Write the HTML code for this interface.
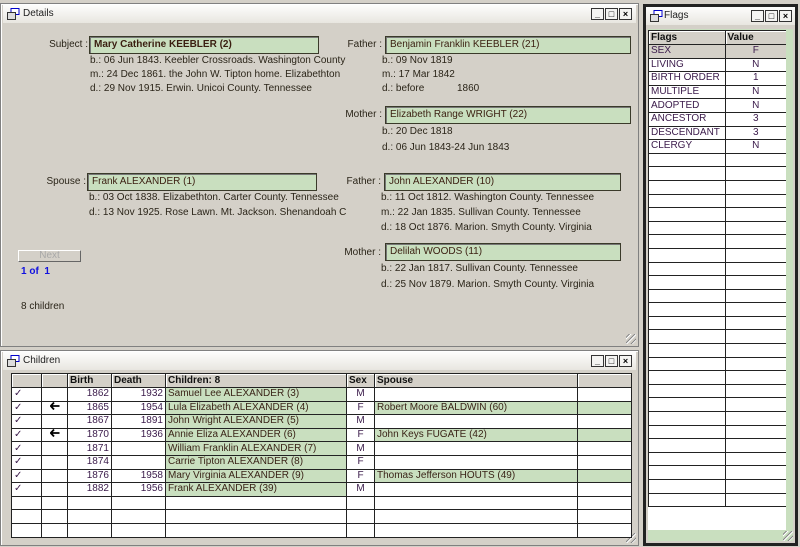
<!DOCTYPE html>
<html><head><meta charset="utf-8"><style>
*{margin:0;padding:0;box-sizing:border-box}
html,body{width:800px;height:547px;overflow:hidden}
body{background:#d4d0c8;font-family:"Liberation Sans",Tahoma,sans-serif;font-size:10px;color:#2a2418;position:relative}
.a{position:absolute;white-space:nowrap}
.win{position:absolute;background:#d4d0c8;border:1px solid #808080;box-shadow:inset 1px 1px 0 #fff}
.tb{position:absolute;left:2px;right:2px;height:18px;background:linear-gradient(#fdfdfc,#e8e6e0);}
.tt{position:absolute;left:20px;top:3px;font-size:10px;color:#222}
.ic{position:absolute;left:4px;top:3px;width:13px;height:12px}
.btns{position:absolute;right:4px;top:3px;display:flex;gap:1px}
.btns span{width:13px;height:12px;border:1px solid #333;background:#f4f4f2;font-size:9px;line-height:10px;text-align:center;font-weight:bold;color:#000}
.box{position:absolute;height:18px;background:#c9dfbf;border:1px solid #3a3a2a;box-shadow:inset 1px 1px 0 #777;padding:2px 4px;font-size:10px;white-space:nowrap;color:#3a1e10}
.lb{position:absolute;text-align:right;white-space:nowrap}
table{border-collapse:collapse;position:absolute;table-layout:fixed;background:#fff}
td{border:1px solid #222;height:13.6px;padding:0 2px;font-size:10px;white-space:nowrap;overflow:hidden;line-height:12px;color:#3a1a4a}
th{border:1px solid #222;height:14px;background:#d4d0c8;text-align:left;padding:0 2px;font-size:10px;font-weight:bold;color:#111;box-shadow:inset 1px 1px 0 #fff}
.g{background:#c9dfbf;color:#3a2418}
.r{text-align:right}.c{text-align:center}
.grip{position:absolute;right:2px;bottom:2px;width:10px;height:10px;background:repeating-linear-gradient(135deg,transparent 0 2px,#888 2px 3px,#fff 3px 4px)}
</style></head><body>

<div class="win" style="left:0;top:3px;width:639px;height:344px">
 <div class="tb" style="top:1px"><svg class="ic" viewBox="0 0 13 12"><rect x="4" y="0.5" width="8" height="6" fill="#fff" stroke="#00c"/><rect x="0.5" y="4.5" width="8" height="7" fill="#ddd" stroke="#333"/></svg><div class="tt">Details</div>
 <div class="btns"><span>_</span><span>□</span><span>×</span></div></div>
 <div class="grip"></div>
</div>
<div class="lb a" style="left:20px;width:68px;top:39px">Subject :</div>
<div class="box" style="left:89px;top:36px;width:230px;font-weight:bold">Mary Catherine KEEBLER (2)</div>
<div class="a" style="left:90px;top:55px">b.: 06 Jun 1843. Keebler Crossroads. Washington County</div>
<div class="a" style="left:90px;top:69px">m.: 24 Dec 1861. the John W. Tipton home. Elizabethton</div>
<div class="a" style="left:90px;top:83px">d.: 29 Nov 1915. Erwin. Unicoi County. Tennessee</div>

<div class="lb a" style="left:330px;width:52px;top:39px">Father :</div>
<div class="box" style="left:385px;top:36px;width:246px">Benjamin Franklin KEEBLER (21)</div>
<div class="a" style="left:382px;top:55px">b.: 09 Nov 1819</div>
<div class="a" style="left:382px;top:69px">m.: 17 Mar 1842</div>
<div class="a" style="left:382px;top:83px">d.: before</div><div class="a" style="left:457px;top:83px">1860</div>

<div class="lb a" style="left:330px;width:52px;top:109px">Mother :</div>
<div class="box" style="left:385px;top:106px;width:246px">Elizabeth Range WRIGHT (22)</div>
<div class="a" style="left:382px;top:126px">b.: 20 Dec 1818</div>
<div class="a" style="left:382px;top:142px">d.: 06 Jun 1843-24 Jun 1843</div>

<div class="lb a" style="left:20px;width:66px;top:176px">Spouse :</div>
<div class="box" style="left:87px;top:173px;width:230px">Frank ALEXANDER (1)</div>
<div class="a" style="left:89px;top:192px">b.: 03 Oct 1838. Elizabethton. Carter County. Tennessee</div>
<div class="a" style="left:89px;top:207px">d.: 13 Nov 1925. Rose Lawn. Mt. Jackson. Shenandoah C</div>

<div class="lb a" style="left:330px;width:51px;top:176px">Father :</div>
<div class="box" style="left:384px;top:173px;width:237px">John ALEXANDER (10)</div>
<div class="a" style="left:381px;top:192px">b.: 11 Oct 1812. Washington County. Tennessee</div>
<div class="a" style="left:381px;top:207px">m.: 22 Jan 1835. Sullivan County. Tennessee</div>
<div class="a" style="left:381px;top:222px">d.: 18 Oct 1876. Marion. Smyth County. Virginia</div>

<div class="lb a" style="left:330px;width:51px;top:247px">Mother :</div>
<div class="box" style="left:385px;top:243px;width:236px">Delilah WOODS (11)</div>
<div class="a" style="left:381px;top:263px">b.: 22 Jan 1817. Sullivan County. Tennessee</div>
<div class="a" style="left:381px;top:279px">d.: 25 Nov 1879. Marion. Smyth County. Virginia</div>

<div class="a" style="left:18px;top:250px;width:63px;height:12px;border:1px solid;border-color:#fff #666 #666 #fff;text-align:center;color:#a8a8a8;font-size:10px;line-height:10px">Next</div>
<div class="a" style="left:21px;top:266px;color:#1010e0;font-weight:bold">1 of &nbsp;1</div>
<div class="a" style="left:21px;top:301px">8 children</div>

<div class="win" style="left:0;top:350px;width:639px;height:196px">
 <div class="tb" style="top:1px"><svg class="ic" viewBox="0 0 13 12"><rect x="4" y="0.5" width="8" height="6" fill="#fff" stroke="#00c"/><rect x="0.5" y="4.5" width="8" height="7" fill="#ddd" stroke="#333"/></svg><div class="tt">Children</div>
 <div class="btns"><span>_</span><span>□</span><span>×</span></div></div>
 <div class="grip"></div>
</div>
<table style="left:11px;top:373px;width:620px">
<colgroup><col style="width:30px"><col style="width:26px"><col style="width:44px"><col style="width:54px"><col style="width:181px"><col style="width:28px"><col style="width:203px"><col style="width:54px"></colgroup>
<tr><th></th><th></th><th>Birth</th><th>Death</th><th>Children: 8</th><th>Sex</th><th>Spouse</th><th></th></tr>
<tr><td>✓</td><td></td><td class="r">1862</td><td class="r">1932</td><td class="g">Samuel Lee ALEXANDER (3)</td><td class="c">M</td><td></td><td></td></tr>
<tr><td>✓</td><td class="c"><svg width="10" height="8" viewBox="0 0 10 8"><path d="M4 0.5L0.8 4L4 7.5M1 4H9.5" stroke="#000" stroke-width="1.8" fill="none"/></svg></td><td class="r">1865</td><td class="r">1954</td><td class="g">Lula Elizabeth ALEXANDER (4)</td><td class="c">F</td><td class="g">Robert Moore BALDWIN (60)</td><td class="g"></td></tr>
<tr><td>✓</td><td></td><td class="r">1867</td><td class="r">1891</td><td class="g">John Wright ALEXANDER (5)</td><td class="c">M</td><td></td><td></td></tr>
<tr><td>✓</td><td class="c"><svg width="10" height="8" viewBox="0 0 10 8"><path d="M4 0.5L0.8 4L4 7.5M1 4H9.5" stroke="#000" stroke-width="1.8" fill="none"/></svg></td><td class="r">1870</td><td class="r">1936</td><td class="g">Annie Eliza ALEXANDER (6)</td><td class="c">F</td><td class="g">John Keys FUGATE (42)</td><td class="g"></td></tr>
<tr><td>✓</td><td></td><td class="r">1871</td><td></td><td class="g">William Franklin ALEXANDER (7)</td><td class="c">M</td><td></td><td></td></tr>
<tr><td>✓</td><td></td><td class="r">1874</td><td></td><td class="g">Carrie Tipton ALEXANDER (8)</td><td class="c">F</td><td></td><td></td></tr>
<tr><td>✓</td><td></td><td class="r">1876</td><td class="r">1958</td><td class="g">Mary Virginia ALEXANDER (9)</td><td class="c">F</td><td class="g">Thomas Jefferson HOUTS (49)</td><td class="g"></td></tr>
<tr><td>✓</td><td></td><td class="r">1882</td><td class="r">1956</td><td class="g">Frank ALEXANDER (39)</td><td class="c">M</td><td></td><td></td></tr>
<tr><td></td><td></td><td></td><td></td><td></td><td></td><td></td><td></td></tr>
<tr><td></td><td></td><td></td><td></td><td></td><td></td><td></td><td></td></tr>
<tr><td style="height:10px"></td><td></td><td></td><td></td><td></td><td></td><td></td><td></td></tr>
</table>

<div class="a" style="left:643px;top:4px;width:155px;height:542px;border:3px solid #222;background:#d4d0c8">
 <div style="position:absolute;left:0;right:0;top:0;height:18px;background:linear-gradient(#fdfdfc,#e8e6e0)"><svg class="ic" viewBox="0 0 13 12"><rect x="4" y="0.5" width="8" height="6" fill="#fff" stroke="#00c"/><rect x="0.5" y="4.5" width="8" height="7" fill="#ddd" stroke="#333"/></svg><div class="tt" style="left:18px">Flags</div>
 <div class="btns" style="right:3px"><span>_</span><span>□</span><span>×</span></div></div>
 <div style="position:absolute;left:2px;right:2px;top:22px;bottom:2px;background:#c9dfbf"></div>
 <div class="grip"></div>
</div>
<div class="a" style="left:648px;top:30px;width:138px;height:500px;background:#fff;overflow:hidden">
<table style="left:0;top:0;width:139px">
<colgroup><col style="width:76px"><col style="width:61px"></colgroup>
<tr><th>Flags</th><th>Value</th></tr>
<tr><td style="background:#d4d0c8">SEX</td><td class="c" style="background:#d4d0c8">F</td></tr>
<tr><td>LIVING</td><td class="c">N</td></tr>
<tr><td>BIRTH ORDER</td><td class="c">1</td></tr>
<tr><td>MULTIPLE</td><td class="c">N</td></tr>
<tr><td>ADOPTED</td><td class="c">N</td></tr>
<tr><td>ANCESTOR</td><td class="c">3</td></tr>
<tr><td>DESCENDANT</td><td class="c">3</td></tr>
<tr><td>CLERGY</td><td class="c">N</td></tr>
<tr><td></td><td></td></tr><tr><td></td><td></td></tr><tr><td></td><td></td></tr><tr><td></td><td></td></tr>
<tr><td></td><td></td></tr><tr><td></td><td></td></tr><tr><td></td><td></td></tr><tr><td></td><td></td></tr>
<tr><td></td><td></td></tr><tr><td></td><td></td></tr><tr><td></td><td></td></tr><tr><td></td><td></td></tr>
<tr><td></td><td></td></tr><tr><td></td><td></td></tr><tr><td></td><td></td></tr><tr><td></td><td></td></tr>
<tr><td></td><td></td></tr><tr><td></td><td></td></tr><tr><td></td><td></td></tr><tr><td></td><td></td></tr>
<tr><td></td><td></td></tr><tr><td></td><td></td></tr><tr><td></td><td></td></tr><tr><td></td><td></td></tr>
<tr><td></td><td></td></tr><tr><td></td><td></td></tr>
</table>
</div>
</body></html>
